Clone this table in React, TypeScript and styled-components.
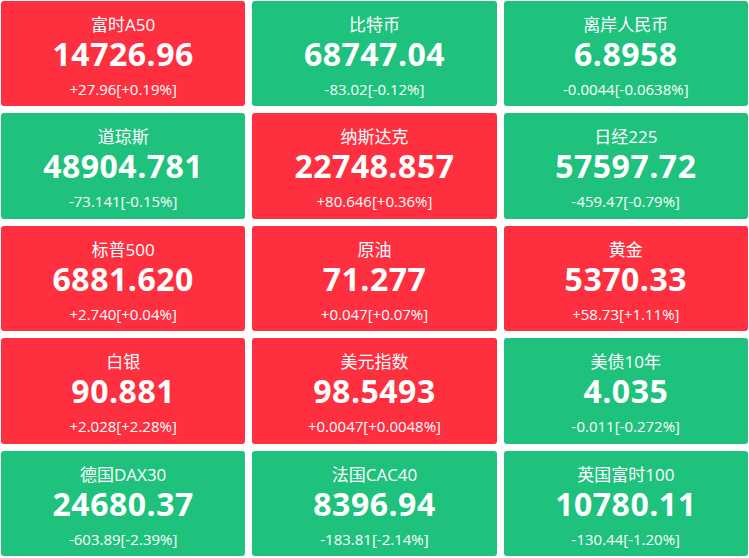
import * as React from 'react';
import styled, { createGlobalStyle } from 'styled-components';

interface Quote {
  name: string;
  price: string;
  change: string;
  percent: string;
}

const quotes: Quote[] = [
  { name: '富时A50', price: '14726.96', change: '+27.96', percent: '+0.19%' },
  { name: '比特币', price: '68747.04', change: '-83.02', percent: '-0.12%' },
  { name: '离岸人民币', price: '6.8958', change: '-0.0044', percent: '-0.0638%' },
  { name: '道琼斯', price: '48904.781', change: '-73.141', percent: '-0.15%' },
  { name: '纳斯达克', price: '22748.857', change: '+80.646', percent: '+0.36%' },
  { name: '日经225', price: '57597.72', change: '-459.47', percent: '-0.79%' },
  { name: '标普500', price: '6881.620', change: '+2.740', percent: '+0.04%' },
  { name: '原油', price: '71.277', change: '+0.047', percent: '+0.07%' },
  { name: '黄金', price: '5370.33', change: '+58.73', percent: '+1.11%' },
  { name: '白银', price: '90.881', change: '+2.028', percent: '+2.28%' },
  { name: '美元指数', price: '98.5493', change: '+0.0047', percent: '+0.0048%' },
  { name: '美债10年', price: '4.035', change: '-0.011', percent: '-0.272%' },
  { name: '德国DAX30', price: '24680.37', change: '-603.89', percent: '-2.39%' },
  { name: '法国CAC40', price: '8396.94', change: '-183.81', percent: '-2.14%' },
  { name: '英国富时100', price: '10780.11', change: '-130.44', percent: '-1.20%' },
];

const App = () => {
  return <>
    <GlobalStyle/>
    <Grid>
      {quotes.map((q) => {
        const up = !q.change.startsWith('-');
        return <Card key={q.name} up={up}>
          <Name>{q.name}</Name>
          <Price>{q.price}</Price>
          <Change>{q.change}[{q.percent}]</Change>
        </Card>;
      })}
    </Grid>
  </>;
};

const GlobalStyle = createGlobalStyle`
  html, body {
    margin: 0;
    padding: 0;
    background: #fff;
  }
  body {
    font-family: "Open Sans", "Noto Sans CJK SC", sans-serif;
  }
`;

const Grid = styled.div`
  box-sizing: border-box;
  height: 558px;
  padding: 1px 1px 2px 1px;
  display: grid;
  grid-template-columns: repeat(3, 1fr);
  grid-template-rows: repeat(5, 1fr);
  gap: 7px;
`;

interface CardProps {
  up: boolean;
}

const Card = styled.div<CardProps>`
  background: ${({ up }) => (up ? '#fe2f3f' : '#1ec27c')};
  border-radius: 3px;
  color: #fff;
  display: flex;
  flex-direction: column;
  align-items: center;
  padding-top: 12px;
  box-sizing: border-box;
  overflow: hidden;
`;

const Name = styled.div`
  font-size: 17px;
  line-height: 23px;
  height: 23px;
  font-weight: 400;
`;

const Price = styled.div`
  font-size: 32px;
  line-height: 36px;
  height: 36px;
  font-weight: 700;
  letter-spacing: 0.5px;
`;

const Change = styled.div`
  font-size: 15px;
  line-height: 20px;
  height: 20px;
  margin-top: 7px;
`;

export default App;
